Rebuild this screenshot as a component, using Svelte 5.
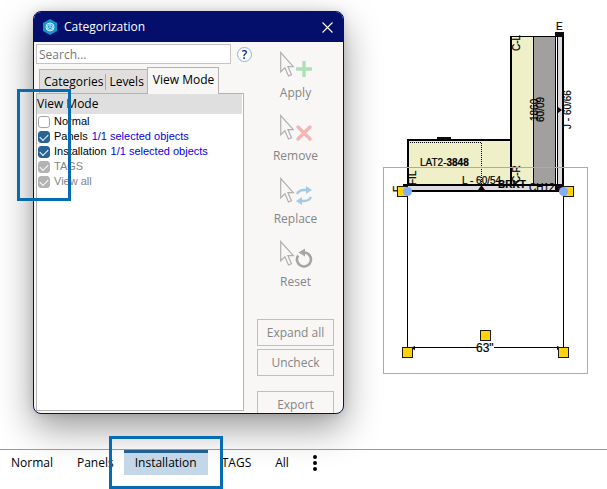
<script>
  let query = $state('');
  const tabs = ['Categories', 'Levels', 'View Mode'];
  let activeTab = $state('View Mode');

  let modes = $state([
    { name: 'Normal', note: '', checked: false, disabled: false },
    { name: 'Panels', note: '1/1 selected objects', checked: true, disabled: false },
    { name: 'Installation', note: '1/1 selected objects', checked: true, disabled: false },
    { name: 'TAGS', note: '', checked: true, disabled: true },
    { name: 'View all', note: '', checked: true, disabled: true }
  ]);

  const actions = ['Apply', 'Remove', 'Replace', 'Reset'];
  const views = ['Normal', 'Panels', 'Installation', 'TAGS', 'All'];
  let activeView = $state('Installation');

  const handles = [
    [397.5, 186.5],
    [563.5, 186.5],
    [402.5, 347.5],
    [558.5, 347.5],
    [480.5, 330.5]
  ];
</script>

<div class="app">
  <main>
    <section class="dialog" aria-label="Categorization">
      <header>
        <svg class="logo" width="14" height="16" viewBox="0 0 14 16" aria-hidden="true">
          <path d="M7 0 14 4v8l-7 4-7-4V4z" fill="#1692cf" />
          <circle cx="7" cy="8" r="4" fill="none" stroke="#d5f1fb" />
          <path d="M7 4v4L3.8 10.3M7 8l3.2 2.3M5 6h4l1 3-3 2-3-2z" fill="none" stroke="#d5f1fb" stroke-width=".8" />
        </svg>
        <h1>Categorization</h1>
        <button class="close" aria-label="Close">
          <svg width="11" height="11" viewBox="0 0 11 11"><path d="M.5.5l10 10M10.5.5l-10 10" stroke="#fff" stroke-width="1.1" /></svg>
        </button>
      </header>

      <div class="body">
        <div class="left">
          <div class="search">
            <input type="text" placeholder="Search..." aria-label="Search" bind:value={query} />
            <button class="help" aria-label="Help">?</button>
          </div>
          <div class="tabs" role="tablist">
            {#each tabs as tab}
              <button role="tab" aria-selected={tab === activeTab} class:active={tab === activeTab} onclick={() => (activeTab = tab)}>{tab}</button>
            {/each}
          </div>
          <div class="panel">
            <h2>View Mode</h2>
            {#each modes as mode}
              <label class:disabled={mode.disabled}>
                <input type="checkbox" bind:checked={mode.checked} disabled={mode.disabled} />
                <span>{mode.name}</span>
                {#if mode.note}<span class="note">{mode.note}</span>{/if}
              </label>
            {/each}
            <div class="callout list-callout"></div>
          </div>
        </div>

        <div class="right">
          {#each actions as action}
            <button class="action">
              <svg width="34" height="28" viewBox="0 0 34 28" fill="none" aria-hidden="true">
                <path d="M1.7 1.5v19.3l4.2-4 3.6 8.2 3-1.3-3.6-8.1h5.4z" stroke="#b0b0b0" stroke-width="1.2" />
                {#if action === 'Apply'}
                  <path d="M25 10v16M17 18h16" stroke="#ade0b5" stroke-width="3.4" />
                {:else if action === 'Remove'}
                  <path d="M19 13l12 12M31 13l-12 12" stroke="#f4b5b5" stroke-width="3.4" stroke-linecap="round" />
                {:else if action === 'Replace'}
                  <path d="M18 17q2-4 7-4h4M32 20q-2 4-7 4h-4" stroke="#a3cbe5" stroke-width="2.4" />
                  <path d="M27 9l6 4-6 4zM23 20l-6 4 6 4z" fill="#a3cbe5" />
                {:else}
                  <path d="M19.2 15.5A7 7 0 1 0 25 12.5h-1" stroke="#a5a5a5" stroke-width="2.6" />
                  <path d="M26 8.5v8l-6.5-4z" fill="#a5a5a5" />
                {/if}
              </svg>
              <span>{action}</span>
            </button>
          {/each}
          <div class="commands">
            <button>Expand all</button>
            <button>Uncheck</button>
            <button class="export">Export</button>
          </div>
        </div>
      </div>
    </section>

    <svg class="drawing" width="232" height="376" viewBox="375 11 232 376" role="img" aria-label="Panel drawing">
      <path d="M511 36h22v149h-22zM408 140h103v45H408z" fill="#efefc8" />
      <path d="M533 36h22v149h-22z" fill="#a29f9f" />
      <path d="M558 36h4v149h-4zM404 186h151v4H404z" fill="#dddae0" />
      <g fill="none" stroke="#000">
        <path d="M510 36.5h54M533.5 36v149M555.5 36v149M557.5 36v149" />
        <path d="M511 36v149M563 36v155M407 140h104M408 140v45M403 185h161M403 191h162" stroke-width="2" />
        <path d="M410 142.5h72M481.5 143v42" stroke-dasharray="1 1" />
        <path d="M407.5 191v160M563.5 191v160M408 347.5h69M494 347.5h69" />
        <path d="M408 348h6M557 348h6" stroke-width="2" />
      </g>
      <path d="M555 32h9v5h-9zM555 184h9v7h-9zM437 137h14v3h-14zM558 107l4 3-4 3zM478 190l3.5-5 3.5 5zM410 348l5-2v4zM562 348l-5-2v4z" fill="#100a10" />
      <g class="marks">
        <text x="556" y="30">E</text>
        <text transform="translate(520 51) rotate(-90)">C-L</text>
        <text transform="translate(538 121) rotate(-90)">1860</text>
        <text transform="translate(544 122) rotate(-90)">60/09</text>
        <text transform="translate(571 129) rotate(-90)">J - 60/66</text>
        <text transform="translate(416 185) rotate(-90)">FIL</text>
        <text transform="translate(520 183) rotate(-90)">C-R</text>
        <text x="420" y="166">LAT2-<tspan class="bold">3848</tspan></text>
        <text x="462" y="184">L - 60/54</text>
        <text class="bold" x="498" y="188">BRKT</text>
        <text x="529" y="191">CH12</text>
        <text transform="translate(401 192) rotate(-90)">F</text>
        <text class="size" x="476" y="352">63"</text>
      </g>
      <rect x="383.5" y="167.5" width="204" height="206" fill="none" stroke="#d9a93f" />
      {#each handles as [x, y]}
        <rect {x} {y} width="10" height="10" fill="#ffd20a" stroke="#1d1a10" />
      {/each}
      <circle cx="407.5" cy="191.5" r="4.5" fill="#82adf8" />
      <circle cx="563.5" cy="191.5" r="4.5" fill="#82adf8" />
    </svg>
  </main>

  <nav aria-label="Views">
    {#each views as view}
      <button class:active={view === activeView} onclick={() => (activeView = view)}>
        {view}
        {#if view === 'Installation'}<span class="callout view-callout"></span>{/if}
      </button>
    {/each}
    <button class="more" aria-label="More">
      <svg width="4" height="16" viewBox="0 0 4 16"><circle cx="2" cy="2" r="2" /><circle cx="2" cy="8" r="2" /><circle cx="2" cy="14" r="2" /></svg>
    </button>
  </nav>
</div>

<style>
  :global(body) {
    background: #fff;
  }
  .app {
    min-height: 100vh;
    display: flex;
    flex-direction: column;
    overflow: hidden;
    font: 12px/16px 'Open Sans', 'Noto Sans', sans-serif;
    color: #000;
  }
  .app * {
    box-sizing: border-box;
  }
  button {
    font: inherit;
    color: inherit;
    background: none;
    border: 0;
    padding: 0;
  }
  main {
    display: flex;
    align-items: flex-start;
    gap: 31px;
    padding: 11px 0 35px 33px;
  }
  .dialog {
    flex: none;
    width: 311px;
    height: 403px;
    display: flex;
    flex-direction: column;
    border: 1px solid #040f6c;
    border-radius: 8px;
    background: #f8f7f6;
    box-shadow: 0 14px 36px rgba(0, 0, 0, 0.4), 0 0 8px rgba(0, 0, 0, 0.12);
  }
  header {
    flex: none;
    height: 30px;
    display: flex;
    align-items: center;
    gap: 7px;
    padding: 0 10px 0 9px;
    border-radius: 7px 7px 0 0;
    background: #040f6c;
    color: #fff;
  }
  h1,
  h2 {
    margin: 0;
    font: inherit;
  }
  .close {
    display: flex;
    margin-left: auto;
  }
  .body {
    flex: 1;
    min-height: 0;
    display: flex;
    gap: 13px;
    padding: 2px 9px 0 2px;
  }
  .left {
    flex: 1;
    display: flex;
    flex-direction: column;
    padding-bottom: 2px;
  }
  .search {
    display: flex;
    align-items: center;
    gap: 6px;
    margin-right: -8px;
  }
  .search input {
    flex: 1;
    min-width: 0;
    height: 20px;
    padding: 0 2px;
    border: 1px solid #c4c4c4;
    background: #fff;
    font: inherit;
  }
  .search input::placeholder {
    color: #777;
    opacity: 1;
  }
  .help {
    width: 15px;
    height: 15px;
    border: 1px solid #8fb4dd;
    border-radius: 50%;
    background: #fff;
    color: #10208c;
    font-weight: 600;
    line-height: 13px;
  }
  .tabs {
    display: flex;
    align-items: flex-end;
    padding: 3px 0 0 3px;
  }
  .tabs button {
    height: 24px;
    padding: 0 3px 0 4px;
    border-top: 1px solid #b5b3b1;
    background: #e1dfdd;
  }
  .tabs button:first-child {
    padding-right: 2px;
    border-left: 1px solid #b5b3b1;
  }
  .tabs button:nth-child(2) {
    background: linear-gradient(#aaa, #aaa) 0 4px / 1px 16px no-repeat #e1dfdd;
  }
  .tabs .active {
    height: 27px;
    margin-bottom: -1px;
    padding: 0 4px 3px 5px;
    border: 1px solid #b5b3b1;
    border-bottom: 0;
    background: #f8f7f6;
    z-index: 1;
  }
  .panel {
    position: relative;
    flex: 1;
    border: 1px solid #b5b3b1;
    background: #fff;
  }
  h2 {
    height: 20px;
    margin-right: 1px;
    line-height: 20px;
    background: #dfdfdf;
  }
  label {
    display: flex;
    align-items: center;
    gap: 4px;
    height: 15px;
    padding-left: 1px;
    font: 11px/15px 'Liberation Sans', Arial, sans-serif;
  }
  label.disabled {
    color: #858585;
  }
  .note {
    color: #0b00e8;
  }
  label input {
    appearance: none;
    flex: none;
    width: 12px;
    height: 12px;
    margin: 0;
    border: 1px solid #a5a5a5;
    border-radius: 3px;
    background: #fff;
  }
  label input:checked {
    border-color: #2a6496;
    background: #2a6496;
  }
  label input:checked::before {
    content: '';
    display: block;
    width: 7px;
    height: 4px;
    margin: 2px 0 0 1px;
    border: solid #fff;
    border-width: 0 0 1px 1px;
    transform: rotate(-45deg);
  }
  label.disabled input:checked {
    border-color: #b3b3b3;
    background: #b3b3b3;
  }
  .callout {
    position: absolute;
    z-index: 2;
    border: 3px solid #056cb4;
    pointer-events: none;
  }
  .list-callout {
    left: -20px;
    top: -5px;
    width: 54px;
    height: 112px;
  }
  .right {
    flex: none;
    width: 77px;
    padding-top: 7px;
    overflow: hidden;
    color: #858585;
  }
  .action {
    display: flex;
    flex-direction: column;
    align-items: center;
    gap: 6px;
    width: 100%;
    height: 63px;
  }
  .commands {
    display: flex;
    flex-direction: column;
    gap: 3px;
    padding-top: 16px;
  }
  .commands button {
    height: 27px;
    border: 1px solid #bfbfbf;
  }
  .commands .export {
    margin-top: 12px;
  }
  .drawing {
    flex: none;
  }
  .marks {
    font: 10px 'Liberation Sans', Arial, sans-serif;
    fill: #000;
    stroke: #000;
    stroke-width: 0.2px;
  }
  .bold {
    font-weight: 700;
  }
  .size {
    font-size: 12px;
  }
  nav {
    display: flex;
    align-items: flex-start;
    height: 40px;
    padding-left: 11px;
    border-top: 1px solid #999;
  }
  nav button {
    position: relative;
    height: 25px;
    margin-right: 24px;
  }
  nav .active {
    width: 84px;
    margin: 0 14px 0 -14px;
    border-top: 3px solid #24608f;
    padding-bottom: 3px;
    background: #c3d7e8;
  }
  .view-callout {
    left: -15px;
    top: -17px;
    width: 114px;
    height: 53px;
  }
  .more {
    display: flex;
    align-items: center;
    margin: 0;
  }
</style>
